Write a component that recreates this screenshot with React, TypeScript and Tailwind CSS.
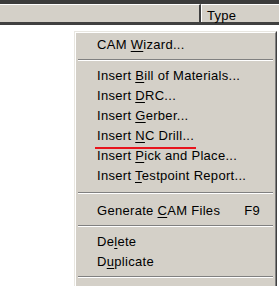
import React from 'react';

const font = { fontFamily: '"Liberation Sans", Arial, sans-serif' };

function Key({ children }: { children: React.ReactNode }) {
  return <span className="underline underline-offset-2">{children}</span>;
}

function Item({ children, shortcut }: { children: React.ReactNode; shortcut?: string }) {
  return (
    <div className="flex h-[20px] items-center pl-[21px] pr-[15px] text-[13px] leading-none tracking-[0.3px] text-black">
      <span className="flex-1 whitespace-nowrap">{children}</span>
      {shortcut && <span>{shortcut}</span>}
    </div>
  );
}

function Sep({ h }: { h: string }) {
  return (
    <div className={`flex ${h} items-center px-[2px]`}>
      <div className="w-full border-t border-b border-t-[#808080] border-b-white" />
    </div>
  );
}

export default function App() {
  return (
    <div className="h-[286px] w-[279px] overflow-hidden bg-white" style={font}>
      <div className="flex h-[25px] border-t-4 border-b-[3px] border-t-[#3c3c3c] border-b-[#404040] bg-[#d4d0c8]">
        <div className="w-[201px] border-t border-t-white border-r-2 border-r-[#404040]" />
        <div className="flex-1 border-t border-l border-t-white border-l-white pl-[5px] pt-[1px] text-[13px] tracking-[0.3px] text-black">
          Type
        </div>
      </div>
      <div className="ml-[74px] mt-[6px] w-[203px] border border-t-[#e8e6e0] border-l-[#e8e6e0] border-r-[#404040] border-b-[#404040] bg-[#d4d0c8]">
        <div className="border border-t-white border-l-white border-r-[#808080] border-b-[#808080] pt-[1px] pb-[20px]">
          <Item>
            CAM <Key>W</Key>izard...
          </Item>
          <Sep h="h-[11px]" />
          <Item>
            Insert <Key>B</Key>ill of Materials...
          </Item>
          <Item>
            Insert <Key>D</Key>RC...
          </Item>
          <Item>
            Insert <Key>G</Key>erber...
          </Item>
          <Item>
            <span className="relative">
              Insert <Key>N</Key>C Drill...
              <span className="absolute -bottom-[6px] -left-[2px] -right-[2px] h-[2px] bg-[#e8141c]" />
            </span>
          </Item>
          <Item>
            Insert <Key>P</Key>ick and Place...
          </Item>
          <Item>
            Insert <Key>T</Key>estpoint Report...
          </Item>
          <Sep h="h-[15px]" />
          <Item shortcut="F9">
            Generate <Key>C</Key>AM Files
          </Item>
          <Sep h="h-[11px]" />
          <Item>
            De<Key>l</Key>ete
          </Item>
          <Item>
            D<Key>u</Key>plicate
          </Item>
          <Sep h="h-[11px]" />
        </div>
      </div>
    </div>
  );
}
